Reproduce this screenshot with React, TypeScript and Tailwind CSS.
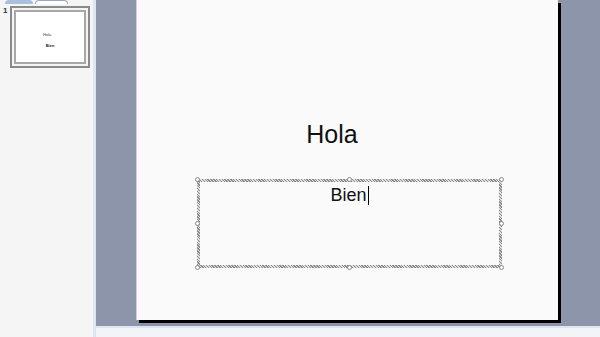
import React from "react";

const Handle = ({ cls }: { cls: string }) => (
  <div className={`absolute w-[5px] h-[5px] rounded-full border border-[#888] bg-white ${cls}`} />
);

export default function App() {
  return (
    <div className="w-[600px] h-[337px] flex overflow-hidden bg-[#f4f4f4] font-['Liberation_Sans',Arial,sans-serif]">
      {/* left panel */}
      <div className="w-[96px] h-full flex flex-col bg-[#f5f5f5] border-r-[3px] border-[#dfe5ee]">
        <div className="h-[4px] flex items-end gap-[2px] pl-[5px] overflow-hidden">
          <div className="w-[28px] h-[4px] bg-[#a9bfdc] rounded-t-sm" />
          <div className="w-[33px] h-[4px] bg-white border border-b-0 border-[#9aa9c0] rounded-t-sm" />
        </div>
        <div className="flex pt-[2px]">
          <div className="w-[10px] pl-[3px] text-[8px] leading-[10px] font-bold text-[#333]">1</div>
          <div className="w-[80px] h-[62px] border-2 border-[#8a8a8a] p-[2px]">
            <div className="w-full h-full border-2 border-[#a8a8a8] bg-white flex flex-col items-center">
              <div className="mt-[20px] ml-[-6px] text-[4px] leading-[5px] text-[#444]">Hola</div>
              <div className="mt-[6px] text-[4px] leading-[5px] font-bold text-[#222]">Bien</div>
            </div>
          </div>
        </div>
      </div>
      {/* right column */}
      <div className="flex-1 h-full flex flex-col">
        <div className="flex-1 bg-[#8c95a9] flex justify-center">
          <div className="relative ml-[1px] w-[425px] h-[323px]">
            <div className="absolute left-[3px] top-[3px] w-[422px] h-[320px] bg-black" />
            <div className="absolute left-0 top-0 w-[422px] h-[320px] bg-[#fafafa] border-l border-[#d0d0d0]">
              <div className="absolute left-0 right-0 top-[119px] flex justify-center">
                <div className="ml-[-31px] text-[25px] leading-[30px] text-[#111]">Hola</div>
              </div>
              <div className="absolute left-[60px] top-[179px] w-[305px] h-[89px] bg-[repeating-linear-gradient(45deg,#8a8a8a_0px,#8a8a8a_1px,#e0e0e0_1px,#e0e0e0_2px)]">
                <div className="absolute inset-[3px] bg-[#fafafa] flex justify-center items-start">
                  <div className="mt-[3px] flex items-center text-[18px] leading-[21px] text-[#111]">
                    Bien<span className="inline-block w-[1px] h-[19px] bg-black ml-[1px]" />
                  </div>
                </div>
                <Handle cls="left-[-2px] top-[-2px]" />
                <Handle cls="left-[150px] top-[-2px]" />
                <Handle cls="right-[-2px] top-[-2px]" />
                <Handle cls="left-[-2px] top-[42px]" />
                <Handle cls="right-[-2px] top-[42px]" />
                <Handle cls="left-[-2px] bottom-[-2px]" />
                <Handle cls="left-[150px] bottom-[-2px]" />
                <Handle cls="right-[-2px] bottom-[-2px]" />
              </div>
            </div>
          </div>
        </div>
        <div className="h-[11px] border-t-[2px] border-[#dfe5ee] bg-[#f3f4f7]" />
      </div>
    </div>
  );
}
